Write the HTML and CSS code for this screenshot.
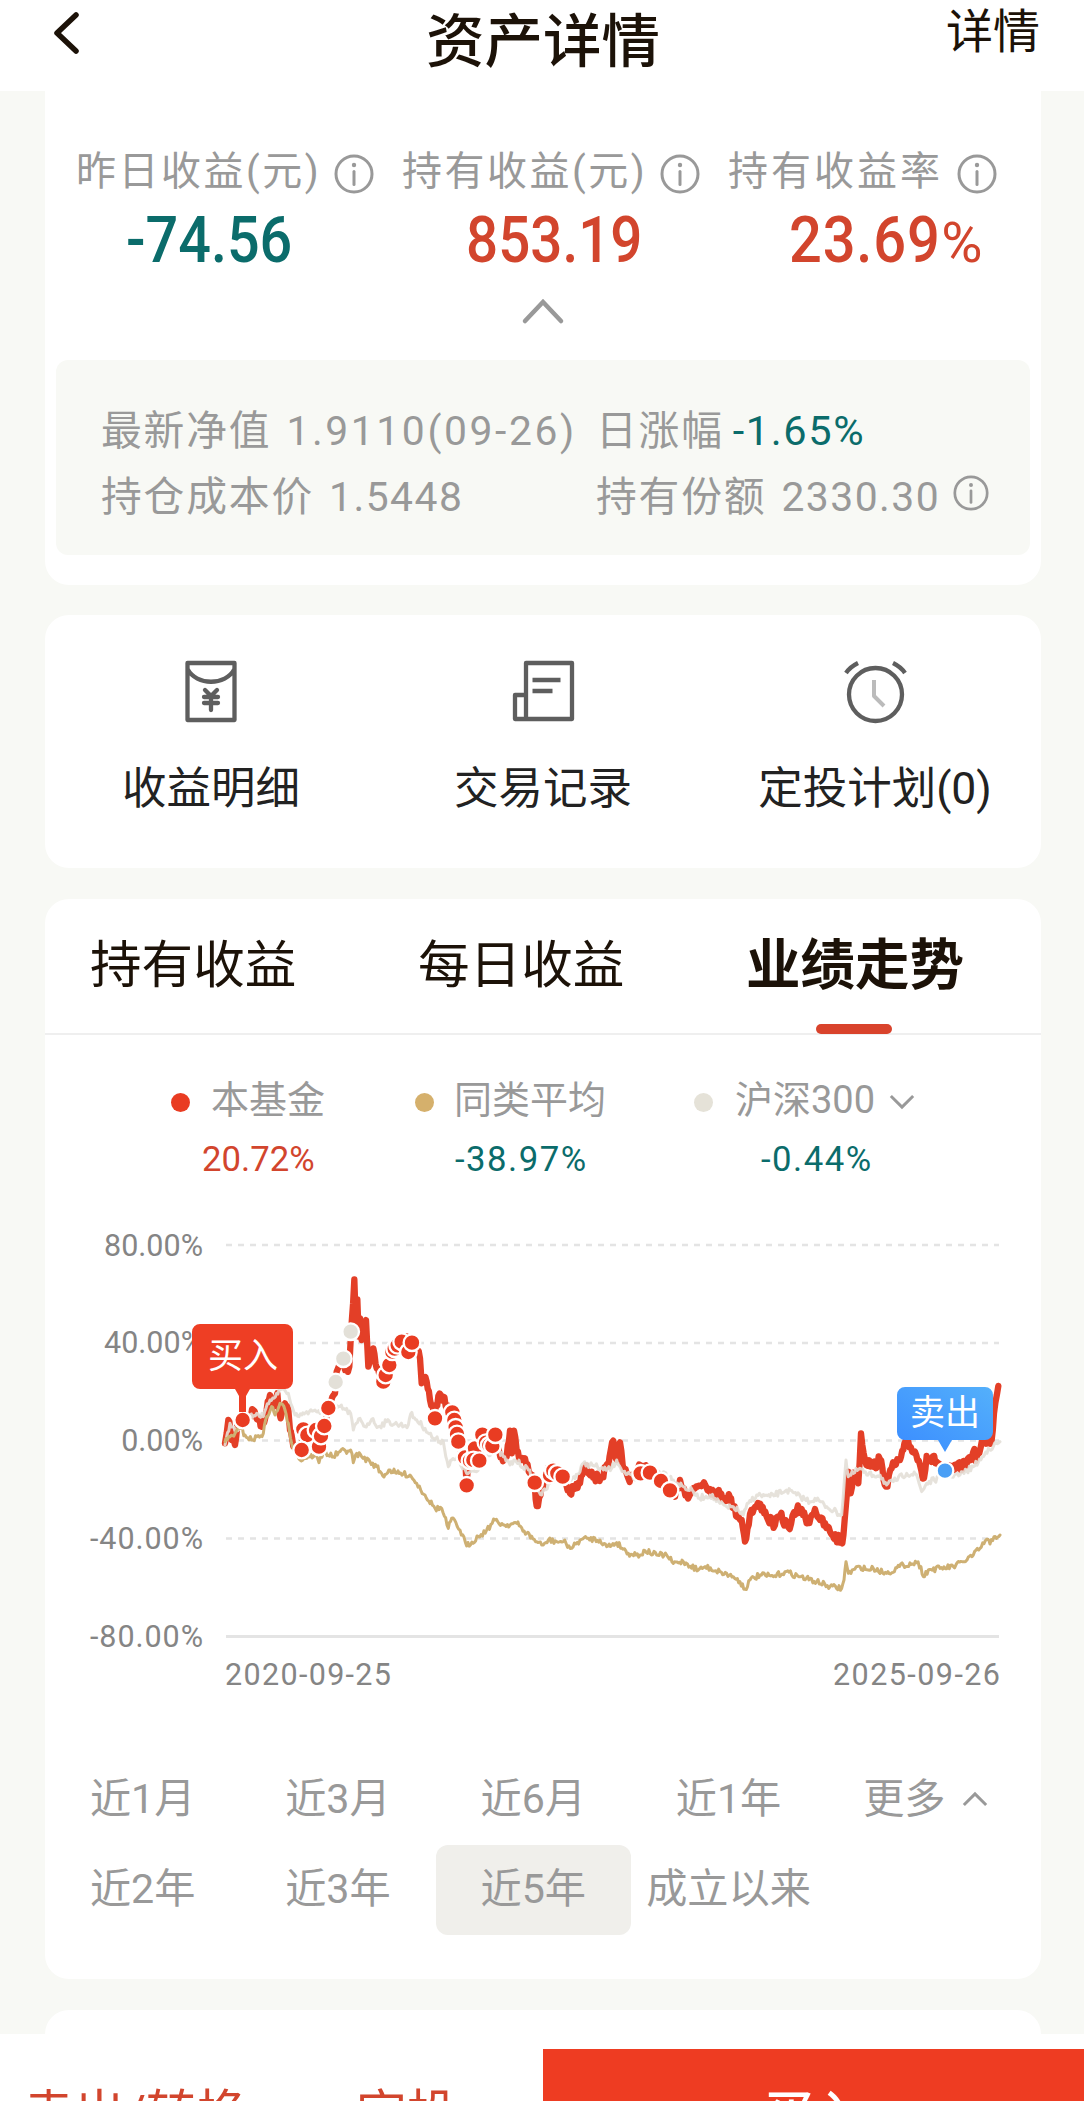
FILE: index.html
```html
<!DOCTYPE html>
<html lang="zh-CN">
<head>
    <meta charset="UTF-8">
    <meta name="viewport" content="width=device-width, initial-scale=1.0">
    <title>资产详情</title>
    <link rel="stylesheet" href="styles.css">
</head>
<body>
    <svg class="symbols" width="0" height="0">
        <symbol id="info" viewBox="0 0 40 40">
            <circle cx="20" cy="20" r="18" fill="none" stroke="#999" stroke-width="3"/>
            <path d="M20 17.5v13" stroke="#999" stroke-width="3" stroke-linecap="round"/>
            <circle cx="20" cy="11" r="2.2" fill="#999"/>
        </symbol>
    </svg>

    <header class="header">
        <svg class="back" viewBox="0 0 28 44"><path d="M24 4L5 22l19 18"/></svg>
        <h1>资产详情</h1>
        <a class="detail">详情</a>
    </header>

    <main class="content">
        <section class="card summary">
            <div class="profits">
                <div class="profit">
                    <div class="label">昨日收益(元)<svg class="info"><use href="#info"/></svg></div>
                    <div class="amount down first">-74.56</div>
                </div>
                <div class="profit">
                    <div class="label">持有收益(元)<svg class="info"><use href="#info"/></svg></div>
                    <div class="amount up second">853.19</div>
                </div>
                <div class="profit">
                    <div class="label rate-label">持有收益率<svg class="info"><use href="#info"/></svg></div>
                    <div class="amount up third">23.69<small>%</small></div>
                </div>
            </div>
            <svg class="collapse" viewBox="0 0 44 28"><path d="M4 24L22 5l18 19"/></svg>
            <div class="nav-box">
                <div>最新净值 <span class="latest">1.9110(09-26)</span></div>
                <div>日涨幅 <span class="rate">-1.65%</span></div>
                <div>持仓成本价 <span>1.5448</span></div>
                <div>持有份额 <span>2330.30</span><svg class="info small"><use href="#info"/></svg></div>
            </div>
        </section>

        <section class="card actions">
            <div class="action">
                <svg class="icon" viewBox="0 0 64 64">
                    <path d="M8.500 3h47v57h-47zM8.500 9c9 17 38 17 47 0"/>
                    <path d="M26 30l6 6 6-6M25 37h14M25 43h14M32 36v14" stroke-linecap="round"/>
                </svg>
                <span>收益明细</span>
            </div>
            <div class="action">
                <svg class="icon" viewBox="0 0 64 64">
                    <path d="M15 3h46v56h-46zM15 35h-11v24h11M21.500 20h28M21.500 31h20"/>
                </svg>
                <span>交易记录</span>
            </div>
            <div class="action">
                <svg class="icon" viewBox="0 0 64 64">
                    <circle cx="32.500" cy="34.500" r="26.500"/>
                    <path d="M3 13q4-6 12-10M50 3q8 4 12 10"/>
                    <path class="hands" d="M31 20v16l10 10"/>
                </svg>
                <span>定投计划(0)</span>
            </div>
        </section>

        <section class="card trend">
            <nav class="tabs">
                <a>持有收益</a>
                <a>每日收益</a>
                <a class="active">业绩走势</a>
            </nav>
            <div class="legend">
                <div class="item fund">
                    <p><i class="dot"></i>本基金</p>
                    <b class="up">20.72%</b>
                </div>
                <div class="item peers">
                    <p><i class="dot"></i>同类平均</p>
                    <b class="down">-38.97%</b>
                </div>
                <div class="item index">
                    <p><i class="dot"></i>沪深300<svg class="arrow" viewBox="0 0 28 18"><path d="M2 3l12 12L26 3"/></svg></p>
                    <b class="down">-0.44%</b>
                </div>
            </div>

            <svg class="chart" viewBox="45 1200 996 520">
                <defs>
                    <linearGradient id="sell" x1="0" y1="1" x2="1" y2="0">
                        <stop offset="0" stop-color="#3a8cff"/>
                        <stop offset="1" stop-color="#54b0fb"/>
                    </linearGradient>
                </defs>
                <g class="grid">
                    <path d="M226 1245H999M226 1343H999M226 1440.500H999M226 1538.500H999"/>
                    <path class="base" d="M226 1636.500H999"/>
                </g>
                <g class="axis">
                    <text x="203" y="1255.500">80.00%</text>
                    <text x="203" y="1353">40.00%</text>
                    <text x="203" y="1451">0.00%</text>
                    <text x="203" y="1549" textLength="113">-40.00%</text>
                    <text x="203" y="1647" textLength="113">-80.00%</text>
                </g>
                <g class="dates">
                    <text x="225" y="1685" textLength="166">2020-09-25</text>
                    <text x="833" y="1685" textLength="167">2025-09-26</text>
                </g>
                <!-- lines and trade points use three units per pixel -->
                <g id="plot" transform="translate(220 1260) scale(.33333)"></g>
                <path fill="#ee3e24" d="M200 1324h85a8 8 0 0 1 8 8v49a8 8 0 0 1-8 8h-35l-4 7v16h-7v-16l-4-7h-35a8 8 0 0 1-8-8v-49a8 8 0 0 1 8-8z"/>
                <text class="tip" x="243" y="1368">买入</text>
                <path fill="url(#sell)" d="M905 1387h80a8 8 0 0 1 8 8v37a8 8 0 0 1-8 8h-33l-7 12-7-12h-33a8 8 0 0 1-8-8v-37a8 8 0 0 1 8-8z"/>
                <text class="tip" x="945" y="1425">卖出</text>
            </svg>

            <div class="ranges">
                <a>近1月</a>
                <a>近3月</a>
                <a>近6月</a>
                <a>近1年</a>
                <a>更多<svg class="arrow" viewBox="0 0 28 18"><path d="M2 15L14 3l12 12"/></svg></a>
                <a>近2年</a>
                <a>近3年</a>
                <a class="active">近5年</a>
                <a>成立以来</a>
            </div>
        </section>

        <section class="card next"></section>
    </main>

    <footer class="footer">
        <a>卖出/转换</a>
        <a>定投</a>
        <a class="buy">买入</a>
    </footer>

    <script src="chart.js"></script>
</body>
</html>
```
FILE: styles.css
```css
* {
    box-sizing: border-box;
}
body {
    margin: 0;
    height: 2101px;
    overflow: hidden;
    display: flex;
    flex-direction: column;
    background-color: #f8f9f5;
    color: #1c1208;
    font-family: Roboto, "Noto Sans CJK SC", sans-serif;
}
svg {
    flex: none;
}
.symbols {
    position: absolute;
}
.up {
    color: #d2452d;
}
.down {
    color: #0b6c6b;
}

/* Header */
.header {
    flex: none;
    height: 91px;
    padding: 0 44px 0 52px;
    background-color: #fff;
    display: grid;
    grid-template-columns: 1fr auto 1fr;
}
.back {
    width: 28px;
    height: 44px;
    margin-top: 11px;
    fill: none;
    stroke: #1c1208;
    stroke-width: 5.500;
    stroke-linecap: round;
    stroke-linejoin: round;
}
.header h1 {
    margin: 0 0 0 -6px;
    font-size: 58.500px;
    font-weight: 500;
    line-height: 84px;
}
.detail {
    justify-self: end;
    font-size: 47px;
    line-height: 64px;
}

/* Cards */
.content {
    flex: none;
    height: 1943px;
    overflow: hidden;
    padding: 0 43px 0 45px;
    display: flex;
    flex-direction: column;
}
.card {
    flex: none;
    background-color: #fff;
    border-radius: 24px;
}
.summary {
    height: 494px;
    padding: 57px 11px 0;
    border-radius: 0 0 24px 24px;
}
.profits {
    display: grid;
    grid-template-columns: 326px 326px auto;
    padding-left: 20px;
}
.label {
    display: flex;
    align-items: center;
    height: 50px;
    color: #999;
    font-size: 40px;
    letter-spacing: 2.500px;
    line-height: 46px;
    padding-bottom: 3px;
    white-space: nowrap;
}
.rate-label {
    letter-spacing: 3px;
}
.info {
    width: 40px;
    height: 40px;
    margin: 4px 0 0 13px;
}
.rate-label .info {
    margin-left: 14px;
}
.info.small {
    width: 36px;
    height: 36px;
    margin: -9px 0 0 13px;
}
.amount {
    width: max-content;
    height: 80px;
    line-height: 85px;
    font-size: 65px;
    font-weight: 500;
    transform: scaleX(.89);
    transform-origin: 0 50%;
}
.amount small {
    margin-left: 1px;
    font-size: 55px;
    font-weight: 400;
    display: inline-block;
    transform: scaleX(1.15);
    transform-origin: 0 50%;
}
.first {
    margin-left: 50px;
    transform: scaleX(.885);
}
.second {
    margin-left: 64px;
    transform: scaleX(.87);
}
.third {
    margin-left: 61px;
    letter-spacing: .9px;
}
.collapse {
    display: block;
    width: 44px;
    height: 28px;
    margin: 19px auto 35px;
    fill: none;
    stroke: #999;
    stroke-width: 4.500;
    stroke-linecap: round;
}
.nav-box {
    height: 195px;
    padding: 38px 0 0 45px;
    background-color: #f8f9f5;
    border-radius: 12px;
    display: grid;
    grid-template-columns: 495px auto;
    grid-auto-rows: 66px;
    color: #999;
    font-size: 40.800px;
    letter-spacing: 1.800px;
    white-space: nowrap;
}
.nav-box div {
    display: flex;
    align-items: center;
    line-height: 66px;
}
.nav-box span {
    margin-left: 15px;
    letter-spacing: 1.500px;
}
.nav-box .latest {
    letter-spacing: 2.600px;
}
.nav-box .rate {
    margin-left: 9px;
    color: #0b6c6b;
    font-size: 41.500px;
    letter-spacing: 1.600px;
}

.actions {
    height: 253px;
    margin-top: 30px;
    padding-top: 45px;
    display: grid;
    grid-template-columns: repeat(3, 1fr);
}
.action {
    display: flex;
    flex-direction: column;
    align-items: center;
    color: #222;
    font-size: 44.500px;
}
.action span {
    margin-top: 35px;
    line-height: 60px;
}
.icon {
    width: 64px;
    height: 64px;
    fill: none;
    stroke: #5e5e5e;
    stroke-width: 4.300;
    stroke-linejoin: round;
}
.hands {
    stroke: #bbb;
    stroke-width: 4;
}

/* Trend card */
.trend {
    height: 1080px;
    margin-top: 31px;
}
.tabs {
    height: 136px;
    padding-left: 45px;
    border-bottom: 2px solid #efefef;
    display: grid;
    grid-template-columns: 328px 328px max-content;
    font-size: 51.600px;
    line-height: 134px;
}
.tabs .active {
    position: relative;
    font-size: 54.500px;
    font-weight: 700;
    line-height: 132px;
}
.tabs .active::after {
    content: "";
    position: absolute;
    left: 70px;
    bottom: -1px;
    width: 76px;
    height: 10px;
    border-radius: 5px;
    background-color: #d9432c;
}
.legend {
    height: 165px;
    padding: 41px 0 0 126px;
    display: grid;
    grid-template-columns: 243px 280px auto;
}
.legend p {
    margin: 0;
    display: flex;
    align-items: center;
    height: 50px;
    padding-bottom: 3px;
    color: #999;
    font-size: 38px;
    line-height: 46px;
    white-space: nowrap;
}
.legend b {
    display: block;
    margin-left: 31px;
    font-size: 34.700px;
    font-weight: 400;
    line-height: 66px;
}
.legend .down {
    letter-spacing: 1.500px;
}
.peers b {
    margin-left: 41px;
}
.index b {
    margin-left: 67px;
}
.dot {
    width: 19px;
    height: 19px;
    margin: 6px 21px 0 0;
    border-radius: 50%;
    background-color: #e93c22;
}
.peers .dot {
    margin: 6px 20px 0 1px;
    background-color: #d5b06c;
}
.index .dot {
    margin-right: 22px;
    background-color: #e5e2d8;
}
.arrow {
    width: 26px;
    height: 17px;
    margin-left: 14px;
    fill: none;
    stroke: #999;
    stroke-width: 3.200;
}
.legend .arrow {
    margin-top: 4px;
}

/* Chart */
.chart {
    display: block;
    width: 996px;
    height: 520px;
}
.grid {
    fill: none;
    stroke: #e4e4e4;
    stroke-width: 2.500;
    stroke-dasharray: 6 6;
}
.grid .base {
    stroke-width: 3;
    stroke-dasharray: none;
}
.axis,
.dates {
    fill: #858585;
    font-size: 30.500px;
}
.axis text {
    text-anchor: end;
}
.tip {
    fill: #fff;
    font-size: 35px;
    text-anchor: middle;
}
#plot {
    fill: none;
    stroke-linejoin: round;
    stroke-linecap: round;
}

.ranges {
    display: grid;
    grid-template-columns: repeat(5, 195.300px);
    grid-auto-rows: 90px;
    padding-top: 35px;
}
.ranges a {
    display: flex;
    align-items: center;
    justify-content: center;
    padding-bottom: 11px;
    color: #999;
    font-size: 41.200px;
}
.ranges .arrow {
    margin: 9px -3px 0 16px;
}
.ranges .active {
    border-radius: 12px;
    background-color: #f0efeb;
}

.next {
    height: 200px;
    margin-top: 31px;
}

/* Footer */
.footer {
    flex: none;
    height: 150px;
    padding-top: 15px;
    background-color: #fff;
    display: grid;
    grid-template-columns: 271px 272px 1fr;
    color: #d2452d;
    font-size: 51px;
    line-height: 132px;
    text-align: center;
}
.footer .buy {
    background-color: #ee3c22;
    color: #fff;
    font-size: 50px;
    font-weight: 500;
}
```
FILE: chart.js
```js
var SVG_NS = 'http://www.w3.org/2000/svg';
var plot = document.getElementById('plot');

var fund = [[15,550],[20,520],[25,480],[35,540],[45,555],[55,470],[68,475],[85,470],[100,450],[115,480],[125,500],[140,450],[150,405],[160,440],[172,400],[182,475],[195,430],[205,450],[210,510],[220,560],[245,575],[250,500],[270,520],[290,500],[297,560],[313,498],[325,444],[345,400],[350,335],[370,296],[375,330],[388,320],[392,240],[403,58],[408,210],[412,118],[416,230],[420,175],[425,240],[438,180],[445,320],[460,265],[470,325],[490,365],[508,315],[530,260],[550,235],[576,248],[600,295],[605,370],[620,365],[630,420],[645,460],[655,408],[670,410],[680,450],[697,457],[710,500],[715,545],[735,590],[740,676],[745,600],[778,600],[787,520],[817,558],[826,524],[845,590],[860,590],[870,512],[876,580],[882,512],[890,570],[905,600],[915,595],[930,640],[944,668],[950,738],[965,680],
    [980,640],[1000,615],[1028,650],[1050,700],[1080,670],[1090,625],[1115,635],[1135,660],[1165,620],[1180,542],[1190,600],[1200,547],[1208,615],[1225,655],[1245,635],[1270,618],[1290,638],[1323,663],[1350,691],[1365,710],[1380,660],[1400,705],[1425,685],[1452,667],[1470,687],[1500,705],[1530,712],[1540,745],[1565,780],[1575,845],[1590,762],[1610,738],[1628,740],[1640,770],[1665,795],[1680,767],[1705,802],[1730,752],[1745,747],[1760,790],[1785,747],[1800,780],[1830,815],[1867,850],[1874,780],[1885,635],[1892,700],[1900,638],[1915,670],[1923,520],[1935,600],[1960,620],[1980,598],[1998,680],[2015,625],[2040,600],[2050,570],[2060,550],[2085,575],[2100,615],[2112,655],[2120,588],[2150,605],[2175,630],[2210,625],[2235,615],[2260,575],[2270,595],[2290,545],[2315,540],[2322,460],[2335,378]];

var peers = [[15,545],[30,530],[45,520],[60,505],[75,525],[95,540],[130,520],[140,470],[155,440],[165,465],[180,430],[195,450],[205,490],[215,550],[240,600],[265,590],[288,585],[297,608],[310,575],[340,590],[360,575],[392,570],[400,608],[410,580],[425,590],[450,605],[470,620],[488,647],[510,630],[530,640],[570,645],[590,670],[615,705],[645,745],[665,745],[685,805],[695,775],[720,810],[740,858],[775,830],[800,810],[825,780],[850,795],[890,790],[920,820],[950,845],[965,855],
    [970,855],[985,840],[1010,845],[1030,845],[1055,865],[1080,840],[1105,835],[1140,840],[1160,860],[1190,848],[1225,880],[1260,885],[1275,872],[1310,885],[1340,885],[1360,910],[1390,905],[1435,930],[1455,920],[1500,935],[1540,950],[1560,965],[1575,988],[1590,960],[1620,945],[1660,950],[1695,935],[1740,950],[1790,965],[1830,980],[1865,985],[1872,960],[1878,905],[1885,940],[1920,920],[1945,930],[1960,925],[2000,940],[2050,915],[2090,908],[2103,920],[2110,950],[2125,930],[2160,925],[2200,920],[2230,905],[2260,885],[2280,865],[2300,838],[2310,852],[2322,830],[2340,825]];

var csi300 = [[15,555],[30,490],[50,510],[68,490],[90,470],[110,460],[130,470],[150,420],[170,400],[185,385],[205,400],[212,430],[225,465],[245,465],[260,455],[285,450],[300,460],[330,450],[360,440],[392,460],[400,510],[420,475],[435,500],[455,478],[475,500],[500,485],[540,495],[565,495],[572,462],[590,480],[615,505],[640,535],[670,545],[685,620],[695,600],[715,600],[740,640],[770,635],[800,590],[826,560],[850,590],[870,615],[885,600],[925,630],[950,680],[965,705],
    [990,670],[1020,645],[1050,660],[1080,635],[1090,610],[1125,618],[1150,630],[1175,625],[1190,600],[1210,635],[1245,660],[1270,635],[1300,635],[1330,635],[1360,660],[1390,680],[1420,695],[1435,715],[1470,705],[1500,730],[1525,745],[1540,740],[1570,765],[1585,730],[1610,705],[1650,710],[1700,690],[1730,705],[1770,725],[1785,715],[1820,740],[1865,765],[1878,600],[1885,650],[1900,640],[1920,625],[1940,645],[1980,645],[2000,675],[2020,665],[2060,640],[2090,645],[2105,695],[2120,670],[2175,645],[2220,645],[2260,620],[2290,590],[2305,565],[2320,560],[2340,545]];

// trade points: x, y
var buys = [[68,480],[250,508],[262,525],[288,510],[245,570],[297,560],[303,528],[313,498],[325,444],
    [490,365],[497,345],[508,315],[517,275],[524,266],[533,256],[545,245],[565,276],[576,248],
    [645,475],[697,457],[703,480],[707,502],[711,522],[715,545],[735,592],[740,676],[750,602],[765,565],[760,600],[778,602],[787,524],[798,548],[808,556],[817,558],[826,524],
    [944,668],[990,645],[1000,632],[1012,640],[1028,650],[1262,640],[1290,638],[1323,663],[1350,691]];
var dividends = [[347,366],[370,296],[392,215]];
var sells = [[2175,632]];

var seed = 7;
function random() {
    seed = (seed * 16807) % 2147483647;
    return seed / 2147483647;
}

function drawLine(points, color, width, swing, opacity) {
    var d = 'M' + points[0];
    for (var i = 1; i < points.length; i++) {
        var a = points[i - 1], b = points[i];
        var steps = Math.max(1, Math.round((b[0] - a[0]) / 4));
        for (var s = 1; s < steps; s++) {
            var x = a[0] + (b[0] - a[0]) * s / steps;
            var y = a[1] + (b[1] - a[1]) * s / steps + (random() - 0.5) * swing;
            d += 'L' + x.toFixed(1) + ' ' + y.toFixed(1);
        }
        d += 'L' + b[0] + ' ' + b[1];
    }
    var path = document.createElementNS(SVG_NS, 'path');
    path.setAttribute('d', d);
    path.setAttribute('stroke', color);
    path.setAttribute('stroke-width', width);
    path.setAttribute('opacity', opacity);
    plot.appendChild(path);
}

function drawDots(points, color) {
    points.forEach(function(p) {
        var dot = document.createElementNS(SVG_NS, 'circle');
        dot.setAttribute('cx', p[0]);
        dot.setAttribute('cy', p[1]);
        dot.setAttribute('r', 25);
        dot.setAttribute('fill', color);
        dot.setAttribute('stroke', '#fff');
        dot.setAttribute('stroke-width', 7);
        plot.appendChild(dot);
    });
}

drawLine(fund, '#e33f27', 19, 30, 1);
drawLine(csi300, '#e3dfd7', 9, 18, 0.9);
drawLine(peers, '#ceb073', 9, 17, 1);
drawDots(buys, '#e93c22');
drawDots(dividends, '#e3e0d8');
drawDots(sells, '#4a9ff5');
```
